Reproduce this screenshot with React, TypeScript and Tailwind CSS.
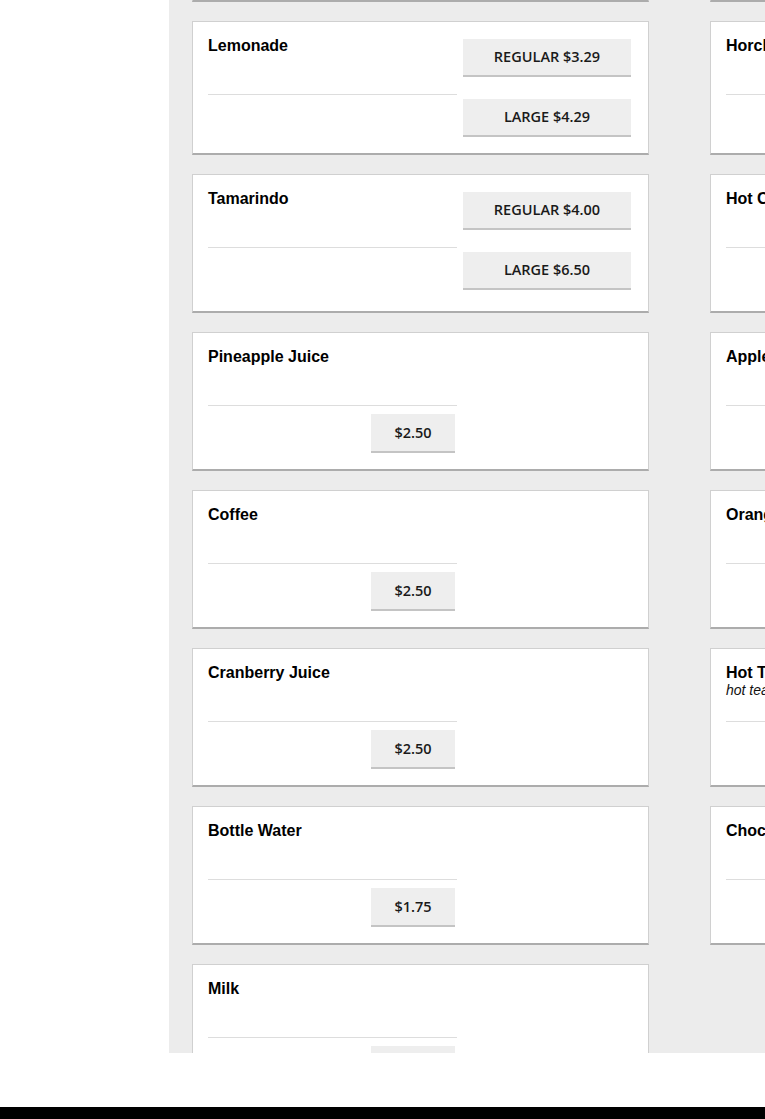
import React from 'react';

type Option = { label: string };
type Item = { name: string; description?: string; options: Option[] } | null;

const ROWS: [Item, Item][] = [
  [
    { name: 'Fruit Punch', options: [{ label: '$2.50' }] },
    { name: 'Iced Tea', options: [{ label: '$2.50' }] },
  ],
  [
    { name: 'Lemonade', options: [{ label: 'REGULAR $3.29' }, { label: 'LARGE $4.29' }] },
    { name: 'Horchata', options: [{ label: 'REGULAR $3.29' }, { label: 'LARGE $4.29' }] },
  ],
  [
    { name: 'Tamarindo', options: [{ label: 'REGULAR $4.00' }, { label: 'LARGE $6.50' }] },
    { name: 'Hot Chocolate', options: [{ label: '$2.50' }] },
  ],
  [
    { name: 'Pineapple Juice', options: [{ label: '$2.50' }] },
    { name: 'Apple Juice', options: [{ label: '$2.50' }] },
  ],
  [
    { name: 'Coffee', options: [{ label: '$2.50' }] },
    { name: 'Orange Juice', options: [{ label: '$2.50' }] },
  ],
  [
    { name: 'Cranberry Juice', options: [{ label: '$2.50' }] },
    { name: 'Hot Tea', description: 'hot tea', options: [{ label: '$2.00' }] },
  ],
  [
    { name: 'Bottle Water', options: [{ label: '$1.75' }] },
    { name: 'Chocolate Milk', options: [{ label: '$2.50' }] },
  ],
  [{ name: 'Milk', options: [{ label: '$2.00' }] }, null],
];

function PriceButton({ label, wide }: { label: string; wide?: boolean }) {
  return (
    <button
      className={
        'flex items-center justify-center bg-[#eeeeee] border-b-2 border-b-[#c4c4c4] text-[14.5px] font-semibold text-[#1a1a1a] ' +
        (wide ? 'h-[38px] w-[168px]' : 'h-[39px] w-[84px]')
      }
      style={{ fontFamily: '"Open Sans", Lato, sans-serif' }}
    >
      {label}
    </button>
  );
}

function ItemCard({ item }: { item: NonNullable<Item> }) {
  const multi = item.options.length > 1;
  return (
    <div
      className="flex w-[457px] bg-white border border-[#d0d0d0] border-b-2 border-b-[#acacac] pl-[15px] pr-[17px]"
      style={{ fontFamily: '"Liberation Sans", Arial, sans-serif' }}
    >
      <div className="w-[249px] shrink-0 pt-[15px] pb-[16px]">
        <div className="h-[58px] border-b border-[#dddddd]">
          <div className="text-[16px] leading-[18px] font-bold text-black">{item.name}</div>
          {item.description && (
            <div className="text-[14px] leading-[16px] italic text-[#111]">{item.description}</div>
          )}
        </div>
        {!multi && (
          <div className="mt-[8px] flex justify-end pr-[2px]">
            <PriceButton label={item.options[0].label} />
          </div>
        )}
      </div>
      {multi && (
        <div className="ml-[6px] flex flex-col gap-[22px] pt-[17px] pb-[16px]">
          {item.options.map((o) => (
            <PriceButton key={o.label} label={o.label} wide />
          ))}
        </div>
      )}
    </div>
  );
}

export default function App() {
  return (
    <div className="w-[765px] h-[1119px] overflow-hidden bg-white flex flex-col">
      <div className="flex h-[1053px] shrink-0">
        <div className="w-[169px] shrink-0 bg-white" />
        <div className="flex-1 overflow-hidden bg-[#ececec] pl-[23px]">
          <div className="-mt-[137px] grid grid-cols-[457px_457px] gap-x-[61px] gap-y-[19px]">
            {ROWS.map(([a, b], i) => (
              <React.Fragment key={i}>
                {a ? <ItemCard item={a} /> : <div />}
                {b ? <ItemCard item={b} /> : <div />}
              </React.Fragment>
            ))}
          </div>
        </div>
      </div>
      <div className="h-[54px] shrink-0 bg-white" />
      <div className="h-[12px] shrink-0 bg-black" />
    </div>
  );
}
